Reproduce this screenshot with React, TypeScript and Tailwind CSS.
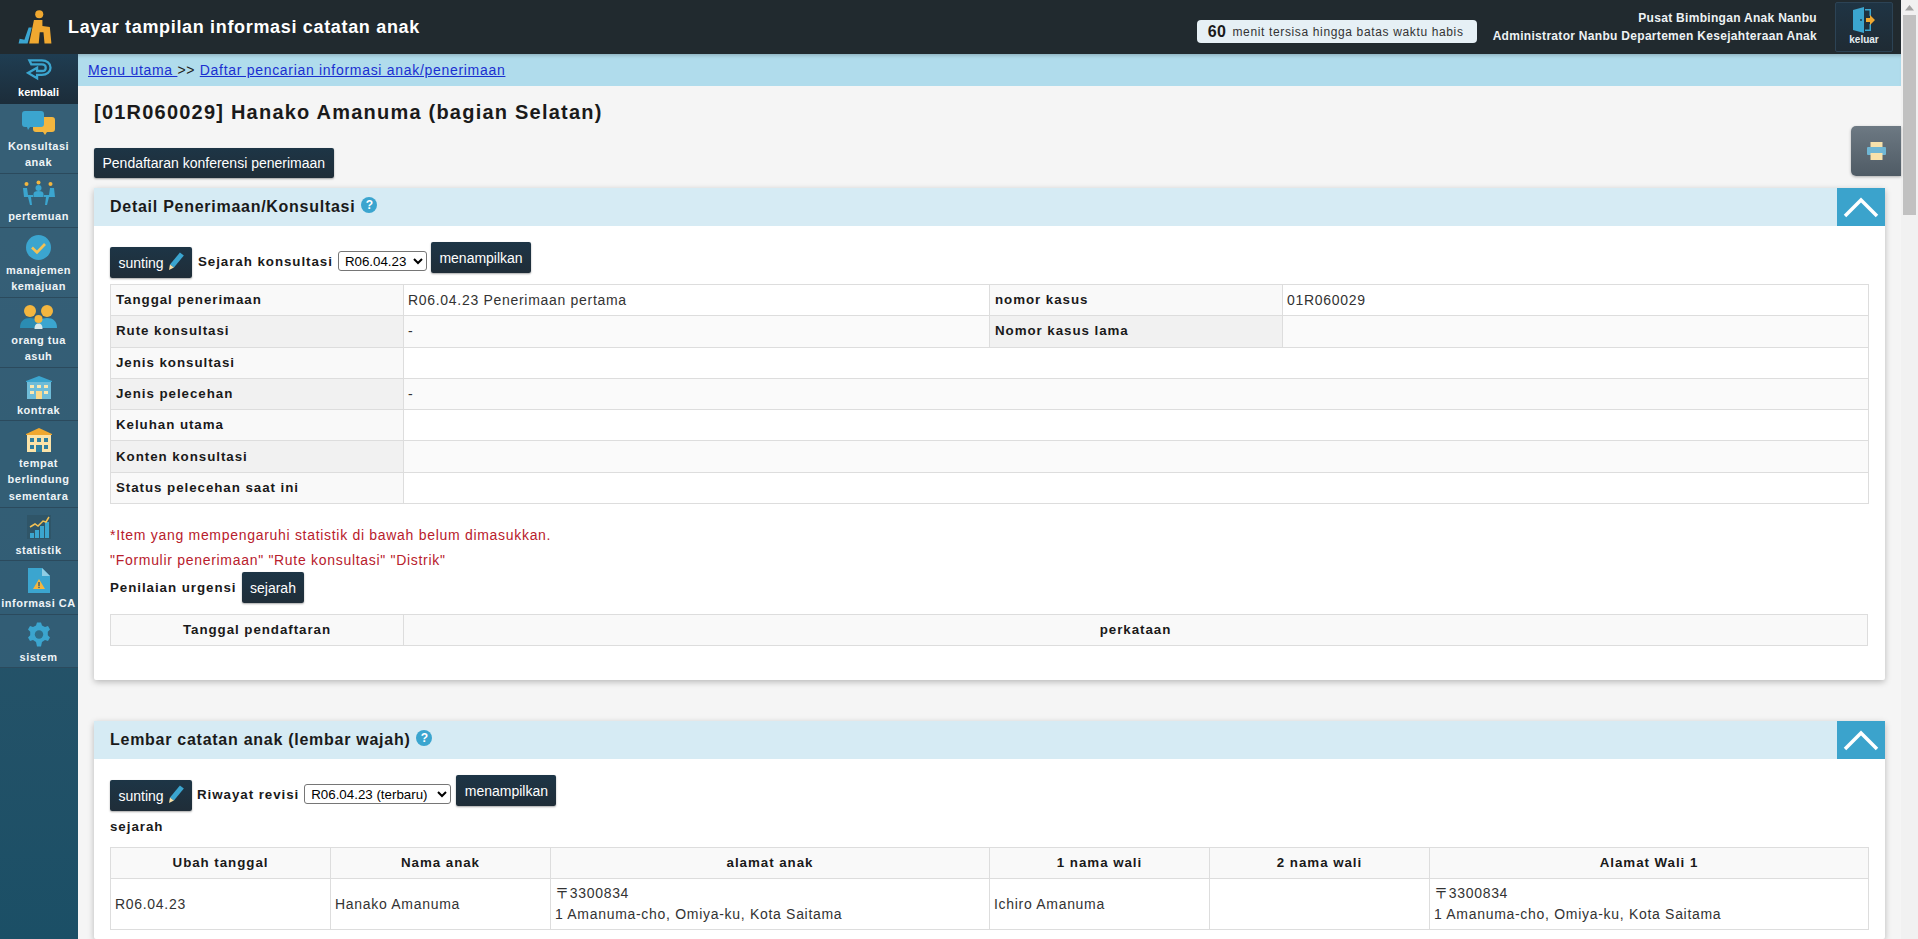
import React from "react";

const FONT = "[font-family:'Liberation_Sans','Noto_Sans_CJK_JP',Arial,sans-serif]";

function Logo() {
  return (
    <svg width="36" height="36" viewBox="0 0 34 34">
      <circle cx="21" cy="5" r="3.800" fill="#f0a830" />
      <path d="M16 10.500h8v5.500l7 1 1.500 15.500h-6.500l-1-10.500h-3.500l-1 10.500h-9z" fill="#f0a830" />
      <path d="M11 17.500h3l-4 15H1.500l1-4.500 4.500 1z" fill="#3ba5d0" />
    </svg>
  );
}

function KembaliIcon() {
  return (
    <svg width="26" height="24" viewBox="0 0 26 25" fill="none" stroke="#3ba5cf" strokeWidth="2.400">
      <path d="M3 1.500h13c5 0 9 3 9 7.500s-4 7.500-9 7.500H11v3.500L1.500 14.500 11 9v3.500h5c2.500 0 4-1.500 4-3.500S18.500 5.500 16 5.500H5z" />
    </svg>
  );
}
function KonsultasiIcon() {
  return (
    <svg width="33" height="24" viewBox="0 0 33 24">
      <path d="M14 6h16a3 3 0 0 1 3 3v9a3 3 0 0 1-3 3h-5l-2 3-2-3h-7a3 3 0 0 1-3-3V9a3 3 0 0 1 3-3z" fill="#f3b63f" />
      <path d="M3 0h16a3 3 0 0 1 3 3v10a3 3 0 0 1-3 3H8l-2 3-1-3H3a3 3 0 0 1-3-3V3a3 3 0 0 1 3-3z" fill="#3ba5cf" />
    </svg>
  );
}
function PertemuanIcon() {
  return (
    <svg width="32" height="27" viewBox="0 0 32 27">
      <circle cx="3.500" cy="4" r="2" fill="#f3b63f" />
      <circle cx="15.500" cy="2.500" r="2" fill="#f3b63f" />
      <circle cx="27.500" cy="4" r="2" fill="#f3b63f" />
      <circle cx="15.500" cy="8" r="3" fill="#3ba5cf" />
      <path d="M10.500 17v-3a5 3 0 0 1 10 0v3z" fill="#3ba5cf" />
      <path d="M0 8h4l1 7h5v2H8l1 8H7l-2-8H1z" fill="#3ba5cf" />
      <path d="M31 8h-4l-1 7h-5v2h2l-1 8h2l2-8h6z" fill="#3ba5cf" />
    </svg>
  );
}
function ManajemenIcon() {
  return (
    <svg width="25" height="25" viewBox="0 0 25 25">
      <circle cx="12.500" cy="12.500" r="12.500" fill="#3ba5cf" />
      <path d="M6 12.500l5 5 8-8.500" fill="none" stroke="#f3c154" strokeWidth="2.600" />
    </svg>
  );
}
function OrangTuaIcon() {
  return (
    <svg width="37" height="24" viewBox="0 0 37 24">
      <circle cx="10" cy="6" r="6" fill="#f3b63f" />
      <circle cx="27" cy="6" r="6" fill="#f3b63f" />
      <path d="M0 23c0-7 4-10 10-10s9 3 9 10z" fill="#2b8cb3" />
      <path d="M18 23c0-7 3-10 9-10s10 3 10 10z" fill="#3ba5cf" />
      <circle cx="18.500" cy="14" r="4" fill="#f3b63f" />
      <path d="M14.500 24c0-4 1.500-5.500 4-5.500s4 1.500 4 5.500z" fill="#d8e8e8" />
    </svg>
  );
}
function KontrakIcon() {
  return (
    <svg width="26" height="23" viewBox="0 0 26 23">
      <path d="M0 5l13-5 13 5v1H0z" fill="#3ba5cf" />
      <rect x="1" y="6" width="24" height="17" fill="#6fbcd8" />
      <rect x="4" y="9" width="4" height="3" fill="#fbe7b0" />
      <rect x="11" y="9" width="4" height="3" fill="#fbe7b0" />
      <rect x="18" y="9" width="4" height="3" fill="#fbe7b0" />
      <rect x="4" y="15" width="4" height="3" fill="#fbe7b0" />
      <rect x="18" y="15" width="4" height="3" fill="#fbe7b0" />
      <rect x="10" y="15" width="6" height="8" fill="#fbd98a" />
    </svg>
  );
}
function TempatIcon() {
  return (
    <svg width="26" height="24" viewBox="0 0 26 24">
      <path d="M0 6l13-6 13 6v1H0z" fill="#f0a830" />
      <rect x="1" y="7" width="24" height="17" fill="#fbe3a8" />
      <rect x="4" y="10" width="4" height="4" fill="#2f7f9f" />
      <rect x="11" y="10" width="4" height="4" fill="#2f7f9f" />
      <rect x="18" y="10" width="4" height="4" fill="#2f7f9f" />
      <rect x="4" y="17" width="4" height="4" fill="#2f7f9f" />
      <rect x="18" y="17" width="4" height="4" fill="#2f7f9f" />
      <rect x="10" y="17" width="6" height="7" fill="#2f7f9f" />
    </svg>
  );
}
function StatistikIcon() {
  return (
    <svg width="24" height="24" viewBox="0 0 24 24">
      <rect x="0" y="0" width="24" height="24" fill="#2f5568" />
      <rect x="3" y="18" width="4" height="5" fill="#3ba5cf" />
      <rect x="8" y="15" width="4" height="8" fill="#3ba5cf" />
      <rect x="13" y="11" width="4" height="12" fill="#3ba5cf" />
      <rect x="18" y="7" width="4" height="16" fill="#3ba5cf" />
      <path d="M3 12l5-3 3 2 5-5 3 1 3-5" fill="none" stroke="#f3c154" strokeWidth="1.500" />
    </svg>
  );
}
function CaIcon() {
  return (
    <svg width="22" height="25" viewBox="0 0 22 25">
      <path d="M0 0h14l8 8v17H0z" fill="#3ba5cf" />
      <path d="M14 0l8 8h-8z" fill="#8fcde4" />
      <path d="M11 11l6 10H5z" fill="#f3b63f" />
      <rect x="10.300" y="14" width="1.400" height="4" fill="#35596d" />
      <rect x="10.300" y="18.700" width="1.400" height="1.400" fill="#35596d" />
    </svg>
  );
}
function SistemIcon() {
  return (
    <svg width="24" height="25" viewBox="0 0 24 24">
      <path d="M10 0h4l1 3 3 1.500 3-1 2 3.500-2.200 2.300v3.400L23 15l-2 3.500-3-1-3 2L14 24h-4l-1-4.500-3-2-3 1L1 15l2.200-2.300V9.300L1 7l2-3.500 3 1L9 3z" fill="#3ba5cf" />
      <circle cx="12" cy="12" r="4.200" fill="#2f6d88" />
    </svg>
  );
}

type Item = { label: string[]; icon: React.ReactNode; h: string; active?: boolean };
const items: Item[] = [
  { label: ["kembali"], icon: <KembaliIcon />, h: "h-[50px]", active: true },
  { label: ["Konsultasi", "anak"], icon: <KonsultasiIcon />, h: "h-[70px]" },
  { label: ["pertemuan"], icon: <PertemuanIcon />, h: "h-[54px]" },
  { label: ["manajemen", "kemajuan"], icon: <ManajemenIcon />, h: "h-[70px]" },
  { label: ["orang tua", "asuh"], icon: <OrangTuaIcon />, h: "h-[70px]" },
  { label: ["kontrak"], icon: <KontrakIcon />, h: "h-[53px]" },
  { label: ["tempat", "berlindung", "sementara"], icon: <TempatIcon />, h: "h-[87px]" },
  { label: ["statistik"], icon: <StatistikIcon />, h: "h-[53px]" },
  { label: ["informasi CA"], icon: <CaIcon />, h: "h-[54px]" },
  { label: ["sistem"], icon: <SistemIcon />, h: "h-[53px]" },
];

function Sidebar() {
  return (
    <nav className="w-[78px] shrink-0 flex flex-col bg-gradient-to-b from-[#35596d] to-[#1b4f66]">
      {items.map((it) => (
        <div
          key={it.label[0]}
          className={`${it.h} flex flex-col items-center pr-[1px] border-b ${
            it.active
              ? "pt-[4px] bg-gradient-to-b from-[#1f3d52] to-[#1c2d3a] border-[#1c2d3a] text-white"
              : "pt-[6px] bg-[#38627a]/70 border-[#2b4a5d] text-[#eef4f7]"
          }`}
        >
          <div className="h-[26px] flex items-center justify-center shrink-0">{it.icon}</div>
          <div className={`${it.active ? "mt-0" : "mt-[1.500px]"} flex flex-col items-center`}>
            {it.label.map((l) => (
              <span
                key={l}
                className={`text-[11px] font-bold leading-[16.500px] whitespace-nowrap ${it.active ? "tracking-[0px]" : "tracking-[0.5px]"}`}
              >
                {l}
              </span>
            ))}
          </div>
        </div>
      ))}
    </nav>
  );
}

function DarkButton({ children, className = "" }: { children: React.ReactNode; className?: string }) {
  return (
    <button
      className={`h-[31px] px-[8.500px] rounded-[2px] bg-gradient-to-b from-[#1d3546] to-[#1f2d38] text-white text-[14px] leading-none whitespace-nowrap shadow-[0_1px_2px_rgba(0,0,0,0.35)] inline-flex items-center ${className}`}
    >
      {children}
    </button>
  );
}

function Pencil() {
  return (
    <svg width="17" height="19" viewBox="0 0 16 18" className="ml-[4px] -mt-[2px]">
      <path d="M12 0l4 3L6 15l-4-3z" fill="#3ba5cf" />
      <path d="M2 12l4 3-5 2.500z" fill="#f6dfa8" />
    </svg>
  );
}

function Help() {
  return (
    <span className="ml-[6px] inline-flex w-[16px] h-[16px] rounded-full bg-[#3ba5cf] text-white text-[12px] font-bold leading-none items-center justify-center relative -top-[3px] tracking-normal">
      ?
    </span>
  );
}

function PanelHeader({ title }: { title: string }) {
  return (
    <div className="h-[38px] bg-[#d6ebf4] flex items-center justify-between pl-[16px]">
      <h2 className="text-[16px] font-bold text-[#1a1a1a] tracking-[0.73px] whitespace-nowrap">
        {title}
        <Help />
      </h2>
      <div className="w-[48px] h-[38px] bg-[#3ba3cc] flex items-center justify-center">
        <svg width="36" height="22" viewBox="0 0 36 22" fill="none" stroke="#fff" strokeWidth="3.500">
          <path d="M2 20L18 4l16 16" />
        </svg>
      </div>
    </div>
  );
}

const labelText = "text-[13.333px] font-bold tracking-[0.95px] text-[#1a1a1a] whitespace-nowrap";
const thBase = "border border-[#dddddd] font-bold text-[13.333px] text-[#1a1a1a] tracking-[0.95px]";
const tdBase = "border border-[#dddddd] text-[14px] text-[#333333] tracking-[0.7px]";

function Th({ children, left, alt }: { children?: React.ReactNode; left?: boolean; alt?: boolean }) {
  return (
    <th className={`${thBase} ${left ? "text-left pl-[5px]" : "text-center"} ${alt ? "bg-[#f1f1f1]" : "bg-[#f9f9f9]"}`}>
      {children}
    </th>
  );
}
function Td({ children, alt, colSpan }: { children?: React.ReactNode; alt?: boolean; colSpan?: number }) {
  return (
    <td colSpan={colSpan} className={`${tdBase} pl-[4px] ${alt ? "bg-[#fafafa]" : "bg-white"}`}>
      {children}
    </td>
  );
}

function DetailTable() {
  return (
    <table className="w-[1758px] border-collapse table-fixed mt-[6px]">
      <colgroup>
        <col className="w-[293px]" />
        <col className="w-[586px]" />
        <col className="w-[293px]" />
        <col className="w-[586px]" />
      </colgroup>
      <tbody>
        <tr className="h-[31.300px]">
          <Th left>Tanggal penerimaan</Th>
          <Td>R06.04.23 Penerimaan pertama</Td>
          <Th left>nomor kasus</Th>
          <Td>01R060029</Td>
        </tr>
        <tr className="h-[31.300px]">
          <Th left alt>Rute konsultasi</Th>
          <Td alt>-</Td>
          <Th left alt>Nomor kasus lama</Th>
          <Td alt />
        </tr>
        <tr className="h-[31.300px]">
          <Th left>Jenis konsultasi</Th>
          <Td colSpan={3} />
        </tr>
        <tr className="h-[31.300px]">
          <Th left alt>Jenis pelecehan</Th>
          <Td colSpan={3} alt>-</Td>
        </tr>
        <tr className="h-[31.300px]">
          <Th left>Keluhan utama</Th>
          <Td colSpan={3} />
        </tr>
        <tr className="h-[31.300px]">
          <Th left alt>Konten konsultasi</Th>
          <Td colSpan={3} alt />
        </tr>
        <tr className="h-[31.300px]">
          <Th left>Status pelecehan saat ini</Th>
          <Td colSpan={3} />
        </tr>
      </tbody>
    </table>
  );
}

function NativeSelect({ value, className }: { value: string; className: string }) {
  return (
    <select
      className={`${className} h-[20px] bg-white border border-[#767676] rounded-[3px] text-[13.333px] text-black pl-[2px]`}
      defaultValue={value}
    >
      <option>{value}</option>
    </select>
  );
}

function FirstPanel() {
  return (
    <section className="h-[492px] bg-white rounded-[2px] shadow-[0_2px_6px_rgba(0,0,0,0.25)] shrink-0">
      <PanelHeader title="Detail Penerimaan/Konsultasi" />
      <div className="px-[16px]">
        <div className="h-[52px] pt-[16px] flex items-start">
          <DarkButton className="mt-[5px] w-[82px]">
            sunting
            <Pencil />
          </DarkButton>
          <span className={`ml-[6px] mt-[10px] ${labelText}`}>Sejarah konsultasi</span>
          <NativeSelect value="R06.04.23" className="ml-[5px] mt-[9px] w-[89px]" />
          <DarkButton className="ml-[4px] w-[100px]">menampilkan</DarkButton>
        </div>
        <DetailTable />
        <p className="mt-[19px] text-[14px] leading-[24.500px] text-[#b8202c] tracking-[0.7px]">
          *Item yang mempengaruhi statistik di bawah belum dimasukkan.
        </p>
        <p className="text-[14px] leading-[24.500px] text-[#b8202c] tracking-[0.7px]">
          "Formulir penerimaan" "Rute konsultasi" "Distrik"
        </p>
        <div className="flex items-center">
          <span className={labelText}>Penilaian urgensi</span>
          <DarkButton className="ml-[5px]">sejarah</DarkButton>
        </div>
        <table className="w-[1758px] border-collapse table-fixed mt-[11px]">
          <colgroup>
            <col className="w-[293px]" />
            <col />
          </colgroup>
          <tbody>
            <tr className="h-[31px]">
              <Th>Tanggal pendaftaran</Th>
              <Th>perkataan</Th>
            </tr>
          </tbody>
        </table>
      </div>
    </section>
  );
}

function SecondPanel() {
  return (
    <section className="mt-[41px] flex-1 bg-white rounded-[2px] shadow-[0_2px_6px_rgba(0,0,0,0.25)]">
      <PanelHeader title="Lembar catatan anak (lembar wajah)" />
      <div className="px-[16px]">
        <div className="h-[53px] pt-[16px] flex items-start">
          <DarkButton className="mt-[5px] w-[82px]">
            sunting
            <Pencil />
          </DarkButton>
          <span className={`ml-[5px] mt-[10px] ${labelText}`}>Riwayat revisi</span>
          <NativeSelect value="R06.04.23 (terbaru)" className="ml-[5px] mt-[9px] w-[147px]" />
          <DarkButton className="ml-[5px] w-[100px]">menampilkan</DarkButton>
        </div>
        <div className={`h-[35px] pt-[5px] ${labelText}`}>sejarah</div>
        <table className="w-[1758px] border-collapse table-fixed">
          <colgroup>
            <col className="w-[220px]" />
            <col className="w-[220px]" />
            <col className="w-[439px]" />
            <col className="w-[220px]" />
            <col className="w-[220px]" />
            <col className="w-[439px]" />
          </colgroup>
          <tbody>
            <tr className="h-[31px]">
              <Th>Ubah tanggal</Th>
              <Th>Nama anak</Th>
              <Th>alamat anak</Th>
              <Th>1 nama wali</Th>
              <Th>2 nama wali</Th>
              <Th>Alamat Wali 1</Th>
            </tr>
            <tr className="h-[51px]">
              <Td>R06.04.23</Td>
              <Td>Hanako Amanuma</Td>
              <Td>
                <div className="leading-[21px]">〒3300834</div>
                <div className="leading-[21px]">1 Amanuma-cho, Omiya-ku, Kota Saitama</div>
              </Td>
              <Td>Ichiro Amanuma</Td>
              <Td />
              <Td>
                <div className="leading-[21px]">〒3300834</div>
                <div className="leading-[21px]">1 Amanuma-cho, Omiya-ku, Kota Saitama</div>
              </Td>
            </tr>
          </tbody>
        </table>
      </div>
    </section>
  );
}

function ExitButton() {
  return (
    <div className="w-[58px] h-[50px] rounded-[2px] border border-[#2c4355] bg-gradient-to-b from-[#1f3444] to-[#1f2b34] flex flex-col items-center pt-[4px]">
      <svg width="24" height="26" viewBox="0 0 24 26">
        <path d="M1 3l11-3v26L1 23z" fill="#3ba5cf" />
        <path d="M13 2h6v7h-1.500V3.500H13zM13 22.500h4.500V17H19v7h-6z" fill="#3ba5cf" />
        <circle cx="9" cy="13" r="0.900" fill="#1f3444" />
        <path d="M14 11h4V8l5 5-5 5v-3h-4z" fill="#f0a830" />
      </svg>
      <span className="text-[10px] font-bold text-[#e6eef2] leading-[14px]">keluar</span>
    </div>
  );
}

export default function App() {
  return (
    <div className={`${FONT} w-[1918px] h-[939px] flex overflow-hidden bg-[#f1f1f1]`}>
      <div className="w-[1901px] h-full flex flex-col">
        <header className="h-[54px] shrink-0 bg-[#212a2f] flex items-center">
          <div className="w-[68px] shrink-0 flex justify-center pl-[2px]">
            <Logo />
          </div>
          <h1 className="text-[18px] font-bold text-white tracking-[0.67px] whitespace-nowrap">
            Layar tampilan informasi catatan anak
          </h1>
          <div className="flex-1" />
          <div className="mt-[9px] w-[280px] h-[23px] rounded-[4px] bg-[#e6f0f5] flex items-center pl-[11px] whitespace-nowrap">
            <span className="text-[16px] font-bold text-[#1a1a1a] tracking-[0.5px]">60</span>
            <span className="ml-[6px] text-[12px] text-[#333] tracking-[0.64px]">menit tersisa hingga batas waktu habis</span>
          </div>
          <div className="ml-[16px] flex flex-col items-end text-[12px] font-bold text-[#eef2f4] leading-[18px] tracking-[0.3px] whitespace-nowrap -mt-[1px]">
            <span>Pusat Bimbingan Anak Nanbu</span>
            <span>Administrator Nanbu Departemen Kesejahteraan Anak</span>
          </div>
          <div className="ml-[18px] mr-[8px]">
            <ExitButton />
          </div>
        </header>
        <div className="flex-1 flex min-h-0">
          <Sidebar />
          <main className="relative flex-1 flex flex-col min-w-0 bg-[#f5f5f5]">
            <div className="h-[32px] shrink-0 bg-[#b0dcec] flex items-center pl-[10px] text-[14px] tracking-[0.7px] text-[#222] shadow-[inset_0_4px_4px_-3px_rgba(0,0,0,0.25)] whitespace-pre">
              <a className="text-[#1a2fd0] underline">Menu utama </a>
              <span>{">> "}</span>
              <a className="text-[#1a2fd0] underline">Daftar pencarian informasi anak/penerimaan</a>
            </div>
            <div className="flex-1 flex flex-col px-[16px] min-h-0">
              <div className="mt-[14px] h-[24px] flex items-center text-[20px] font-bold text-[#1a1a1a] tracking-[1.220px] whitespace-nowrap">
                [01R060029] Hanako Amanuma (bagian Selatan)
              </div>
              <div className="mt-[24px] shrink-0">
                <DarkButton className="!h-[30px]">Pendaftaran konferensi penerimaan</DarkButton>
              </div>
              <div className="mt-[10px] flex-1 flex flex-col min-h-0">
                <FirstPanel />
                <SecondPanel />
              </div>
            </div>
            <div className="absolute right-0 top-[72px] w-[50px] h-[50px] rounded-l-[5px] bg-gradient-to-b from-[#6d7983] to-[#4f5b65] shadow-[0_1px_3px_rgba(0,0,0,0.3)] flex items-center justify-center">
              <svg width="19" height="18" viewBox="0 0 19 18">
                <rect x="3.500" y="0" width="12" height="5" fill="#f8e2ab" />
                <rect x="0" y="5" width="19" height="8" rx="1" fill="#6fb6d4" />
                <rect x="3.500" y="11" width="12" height="7" fill="#f8e2ab" />
              </svg>
            </div>
          </main>
        </div>
      </div>
      <div className="w-[17px] h-full bg-[#f1f1f1] flex flex-col items-center">
        <svg width="9" height="6" viewBox="0 0 9 6" className="mt-[5px] mb-[4px]">
          <path d="M4.500 0L9 5.500H0z" fill="#a3a3a3" />
        </svg>
        <div className="w-[13px] h-[200px] bg-[#c1c1c1]" />
      </div>
    </div>
  );
}
